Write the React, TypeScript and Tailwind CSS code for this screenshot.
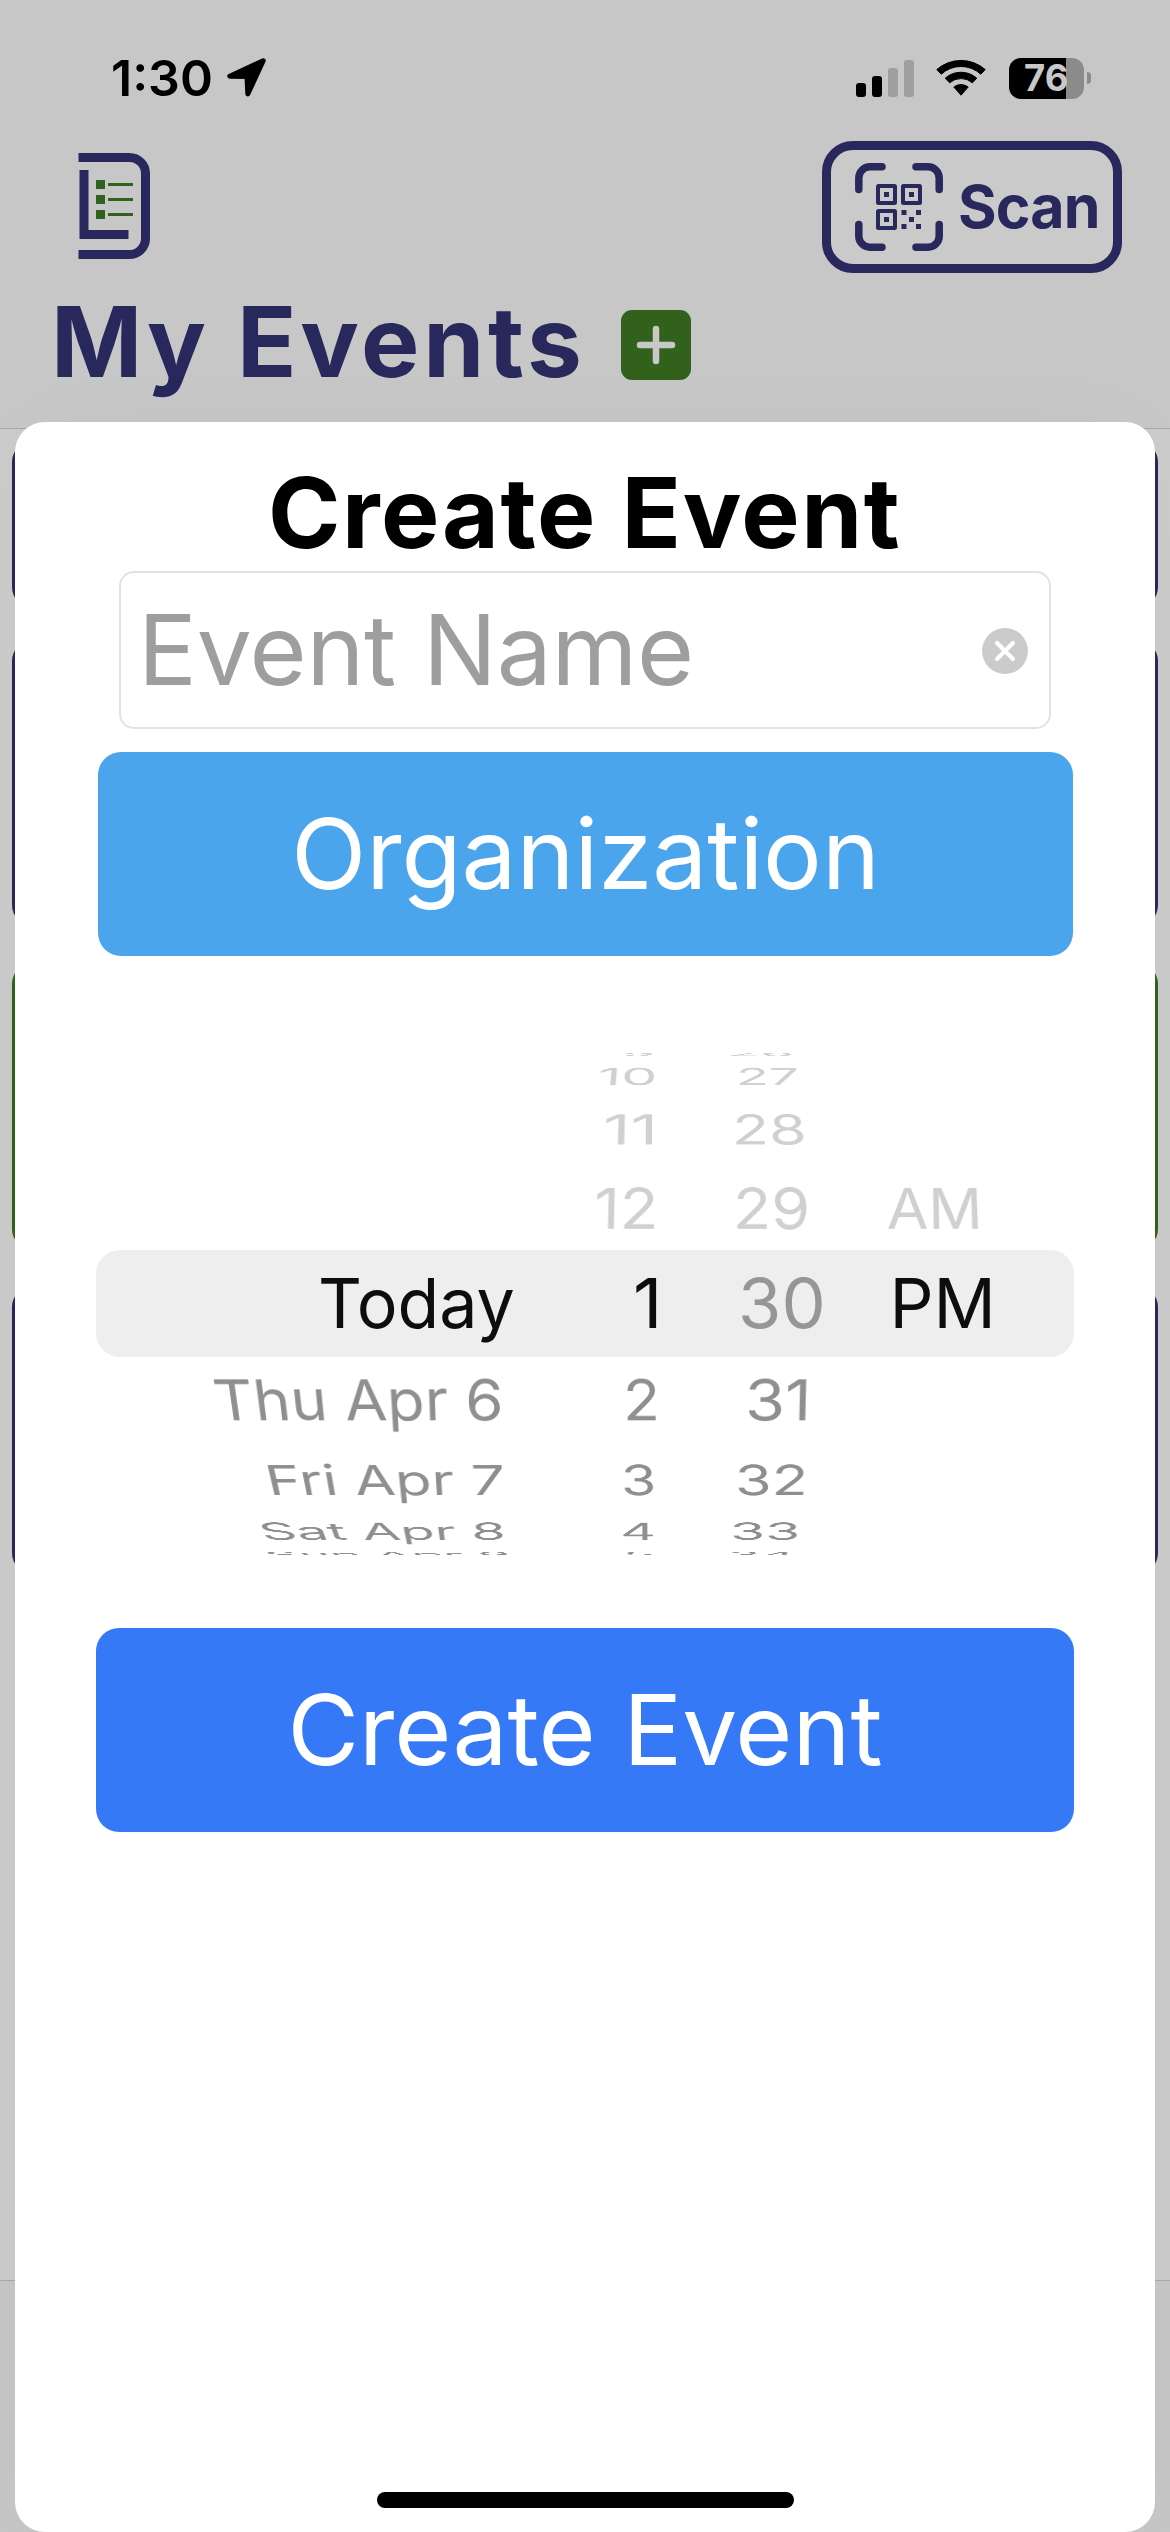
import React from 'react';

function LocationArrow() {
  return (
    <svg viewBox="0 0 40 40" className="h-10 w-10" fill="black" stroke="black" strokeWidth="5" strokeLinejoin="round">
      <polygon points="36.2,2.8 2.8,18.2 20,18.6 20.8,36" />
    </svg>
  );
}

function Signal() {
  return (
    <div className="flex h-[37px] items-end gap-[6px]">
      <div className="h-[14px] w-[10px] rounded-[3px] bg-black" />
      <div className="h-[21px] w-[10px] rounded-[3px] bg-black" />
      <div className="h-[29px] w-[10px] rounded-[3px] bg-[#9f9f9f]" />
      <div className="h-[37px] w-[10px] rounded-[3px] bg-[#9f9f9f]" />
    </div>
  );
}

function Wifi() {
  return (
    <svg viewBox="0 0 50 38" className="ml-[22px] h-[38px] w-[50px]" fill="black" stroke="black" strokeWidth="1" strokeLinejoin="round">
      <path d="M0.8 10.6A36.5 36.5 0 0 1 49.2 10.6L44.8 15.2A29.3 29.3 0 0 0 5.2 15.2Z" />
      <path d="M9.2 19.2A24 24 0 0 1 40.8 19.2L36.4 23.8A17.4 17.4 0 0 0 13.6 23.8Z" />
      <path d="M17.8 28A12 12 0 0 1 32.2 28L25 36.2Z" />
    </svg>
  );
}

function Battery() {
  return (
    <div className="ml-[23px] flex items-center">
      <div className="flex h-[41px] w-[75px] items-center rounded-[12px] bg-[linear-gradient(to_right,#000_57px,#8b8b8b_57px)] pl-[15px] text-[36.5px] leading-none font-bold text-[#c8c8c8]">
        76
      </div>
      <div className="ml-[3px] h-[12px] w-[4px] rounded-r-full bg-[#8b8b8b]" />
    </div>
  );
}

function Logo() {
  return (
    <svg viewBox="0 0 72 106" className="mb-[2px] h-[106px] w-[72px]" fill="none">
      <g stroke="#28285c" strokeWidth="9">
        <path d="M0.5 4.5H51.5A16 16 0 0 1 67.5 20.5V85.5A16 16 0 0 1 51.5 101.5H0.5" />
        <path d="M6 17V81.5H50.5" />
      </g>
      <g fill="#32611b">
        <rect x="18" y="27" width="9" height="9" />
        <rect x="18" y="42" width="9" height="9" />
        <rect x="18" y="57" width="9" height="9" />
        <rect x="30" y="30" width="25" height="3" />
        <rect x="30" y="45" width="25" height="3" />
        <rect x="30" y="60" width="25" height="3" />
      </g>
    </svg>
  );
}

function QrScan() {
  return (
    <svg viewBox="0 0 88 88" className="h-[88px] w-[88px]" fill="none" stroke="#28285c">
      <g strokeWidth="7.5" strokeLinecap="round">
        <path d="M3.8 26.5V15A11.2 11.2 0 0 1 15 3.8H27" />
        <path d="M61 3.8H73A11.2 11.2 0 0 1 84.2 15V26.5" />
        <path d="M84.2 61.5V73A11.2 11.2 0 0 1 73 84.2H61" />
        <path d="M27 84.2H15A11.2 11.2 0 0 1 3.8 73V61.5" />
      </g>
      <g strokeWidth="4">
        <rect x="23" y="23" width="17" height="17" rx="0.5" />
        <rect x="48" y="23" width="17" height="17" rx="0.5" />
        <rect x="23" y="48" width="17" height="17" rx="0.5" />
      </g>
      <g fill="#28285c" stroke="none">
        <rect x="29" y="29" width="5" height="5" />
        <rect x="54" y="29" width="5" height="5" />
        <rect x="29" y="54" width="5" height="5" />
        <rect x="46.5" y="47" width="5" height="5" />
        <rect x="61" y="47" width="5" height="5" />
        <rect x="54" y="54" width="5" height="5" />
        <rect x="46.5" y="61" width="5" height="5" />
        <rect x="61" y="61" width="5" height="5" />
      </g>
    </svg>
  );
}

function EventsScreen() {
  return (
    <div className="flex h-full flex-col bg-[#cbcbcb]">
      <header className="h-[429px] border-b border-[#a9a9a9] bg-[#c7c7c7]">
        <div className="flex h-[141px] items-center justify-between pt-[15px] pr-[79px] pl-[111px]">
          <div className="flex items-center">
            <span className="text-[50px] leading-none font-semibold">1:30</span>
            <span className="ml-[14px]">
              <LocationArrow />
            </span>
          </div>
          <div className="flex items-center">
            <Signal />
            <Wifi />
            <Battery />
          </div>
        </div>
        <div className="flex h-[132px] items-center justify-between pr-[48px] pl-[78px]">
          <Logo />
          <button className="flex h-[132px] w-[300px] items-center rounded-[31px] border-[9px] border-[#28285c] bg-[#cacaca] pl-[24px]">
            <QrScan />
            <span className="mb-[2px] ml-[15px] text-[59px] leading-none font-bold tracking-[-0.8px] text-[#28285c]">Scan</span>
          </button>
        </div>
        <div className="flex h-[138px] items-center pl-[51px]">
          <h1 className="text-[98px] leading-none font-bold tracking-[3.8px] whitespace-nowrap text-[#28285c]">My Events</h1>
          <button className="mt-[6px] ml-[35px] flex h-[70px] w-[70px] items-center justify-center rounded-[11px] bg-[#32611b]">
            <svg viewBox="0 0 40 40" className="h-10 w-10" stroke="#c8c8c8" strokeWidth="6.5" strokeLinecap="round">
              <path d="M20 4V36M4 20H36" />
            </svg>
          </button>
        </div>
      </header>
      <main className="flex flex-1 flex-col px-[12px] pt-[13px]">
        <div className="h-[165px] rounded-[20px] border-[6px] border-[#28285c]" />
        <div className="mt-[34px] h-[284px] rounded-[20px] border-[6px] border-[#28285c]" />
        <div className="mt-[39px] h-[285px] rounded-[20px] border-[6px] border-[#32611b]" />
        <div className="mt-[38px] h-[286px] rounded-[20px] border-[6px] border-[#28285c]" />
      </main>
      <footer className="h-[252px] border-t border-[#a9a9a9] bg-[#c6c6c6]" />
    </div>
  );
}

// Text, left offset inside the column, horizontal scale.
type Item = [string, number, number] | null;

// `center` is the page x where the column's perspective vanishes.
type Column = { x: number; center: number; width: string; items: Item[]; dimmed?: boolean };

const ROWS = [
  { height: 'h-[17px]', angle: 84, color: 'text-[#cfcfcf]' },
  { height: 'h-[29px]', angle: 70, color: 'text-[#d0d0d0]' },
  { height: 'h-[76px]', angle: 53, color: 'text-[#d0d0d0]' },
  { height: 'h-[83px]', angle: 35, color: 'text-[#d0d0d0]' },
  { height: 'h-[107px]', angle: 0, color: 'text-[#0d0d0d]' },
  { height: 'h-[87px]', angle: -35, color: 'text-[#8f8f8f]' },
  { height: 'h-[72px]', angle: -53, color: 'text-[#8f8f8f]' },
  { height: 'h-[31px]', angle: -70, color: 'text-[#8f8f8f]' },
  { height: 'h-[14px]', angle: -84, color: 'text-[#8f8f8f]' },
];

const COLUMNS: Column[] = [
  {
    x: 96,
    center: 500,
    width: 'w-[461px]',
    items: [null, null, null, null, ['Today', 222, 0.987], ['Thu Apr 6', 118, 0.895], ['Fri Apr 7', 170, 0.863], ['Sat Apr 8', 163.5, 0.812], ['Sun Apr 9', 170, 0.754]],
  },
  {
    x: 557,
    center: 650,
    width: 'w-[140px]',
    items: [['9', 64, 0.8], ['10', 40.5, 0.83], ['11', 46, 0.977], ['12', 37, 0.92], ['1', 76, 1.05], ['2', 65.6, 0.88], ['3', 63.7, 0.83], ['4', 62.8, 0.81], ['5', 65, 0.82]],
  },
  {
    x: 697,
    center: 760,
    width: 'w-[153px]',
    dimmed: true,
    items: [['26', 30, 0.79], ['27', 39, 0.78], ['28', 34.6, 0.88], ['29', 35.5, 0.907], ['30', 41, 1.018], ['31', 48, 0.94], ['32', 37.6, 0.862], ['33', 32.7, 0.825], ['34', 31, 0.766]],
  },
  {
    x: 850,
    center: 910,
    width: 'w-[224px]',
    items: [null, null, null, ['AM', 37, 0.869], ['PM', 39.5, 1], null, null, null, null],
  },
];

function WheelColumn({ column }: { column: Column }) {
  return (
    <div className={`${column.width} flex flex-col`}>
      {ROWS.map((row, i) => {
        const item = column.items[i];
        const color = i === 4 && column.dimmed ? 'text-[#969696]' : row.color;
        return (
          <div key={i} className={`${row.height} ${color} flex shrink-0 items-center`}>
            {item && (
              <span
                className="block text-[69px] leading-none whitespace-nowrap"
                style={{
                  marginLeft: item[1],
                  transformOrigin: `${column.center - column.x - item[1]}px 50%`,
                  transform: row.angle ? `perspective(1300px) rotateX(${row.angle}deg)` : undefined,
                }}
              >
                <span className="block origin-left" style={{ transform: `scaleX(${item[2]})` }}>
                  {item[0]}
                </span>
              </span>
            )}
          </div>
        );
      })}
    </div>
  );
}

function DateWheel() {
  return (
    <div className="relative mx-[81px] mt-[97px] h-[502px] overflow-hidden">
      <div className="absolute inset-x-0 top-[197px] h-[107px] rounded-[24px] bg-[#eeeeee]" />
      <div className="relative -mt-[8px] flex">
        {COLUMNS.map((c) => (
          <WheelColumn key={c.x} column={c} />
        ))}
      </div>
    </div>
  );
}

function CreateEventSheet() {
  return (
    <div className="absolute top-[422px] left-[15px] flex h-[2110px] w-[1140px] flex-col rounded-[30px] bg-white shadow-[0_0_110px_rgba(0,0,0,0.02)]">
      <h2 className="mt-[31px] pl-[253px] text-[98px] leading-[119px] font-bold tracking-[1.55px] whitespace-nowrap text-black">Create Event</h2>
      <div className="mx-[104px] -mt-px flex h-[158px] items-center justify-between rounded-[15px] border-2 border-[#e2e2e2] pr-[21px] pl-[17px]">
        <span className="text-[98px] leading-none tracking-[-0.27px] whitespace-nowrap text-[#9e9e9e]">Event Name</span>
        <svg viewBox="0 0 46 46" className="mt-[2px] h-[46px] w-[46px]">
          <circle cx="23" cy="23" r="23" fill="#cbcbcb" />
          <path d="M15 15L31 31M31 15L15 31" stroke="white" strokeWidth="4.2" strokeLinecap="round" />
        </svg>
      </div>
      <button className="mt-[23px] mr-[82px] ml-[83px] flex h-[204px] items-center justify-center rounded-[23px] bg-[#4ba5ed] text-[98px] leading-none text-white">Organization</button>
      <DateWheel />
      <button className="mx-[81px] mt-[73px] flex h-[204px] items-center justify-center rounded-[23px] bg-[#3579f6] text-[98px] leading-none text-white">Create Event</button>
      <div className="mx-auto mt-auto mb-[24px] h-[16px] w-[417px] rounded-full bg-black" />
    </div>
  );
}

export default function App() {
  return (
    <div className="relative h-[2532px] w-[1170px] overflow-hidden bg-[#cbcbcb] font-['Inter','Liberation_Sans',sans-serif] text-black">
      <EventsScreen />
      <CreateEventSheet />
    </div>
  );
}
